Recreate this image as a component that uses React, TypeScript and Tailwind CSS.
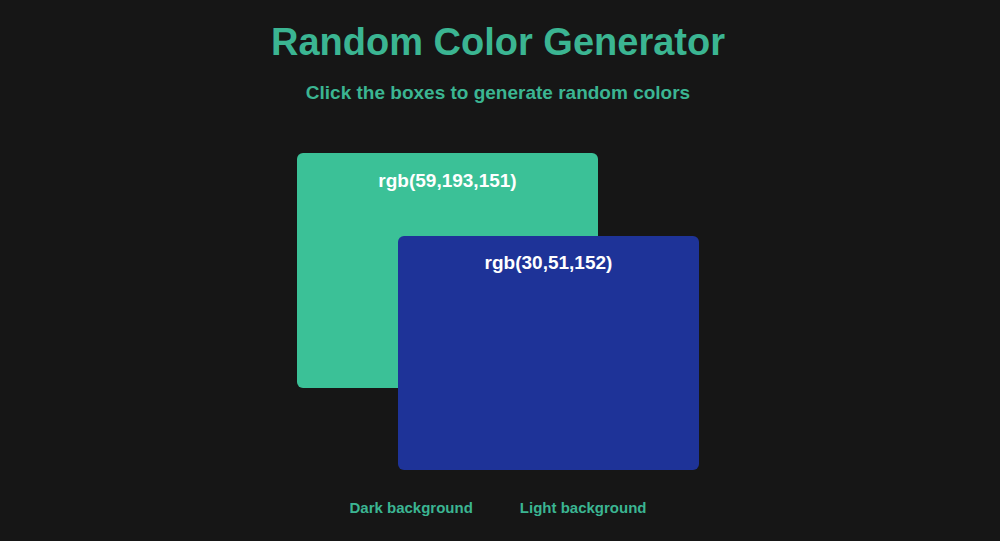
export default function App() {
  return (
    <div
      className="flex flex-col items-center w-full h-[541px] bg-[#161616] pr-[4px] font-bold"
      style={{ fontFamily: '"Liberation Sans", Arial, sans-serif' }}
    >
      <h1 className="mt-[20px] text-[38px] leading-[44px] text-[#3bb592]">
        Random Color Generator
      </h1>
      <p className="mt-[17px] text-[19px] leading-[24px] text-[#3bb592]">
        Click the boxes to generate random colors
      </p>
      <div className="mt-[48px] w-[402px]">
        <div className="w-[301px] h-[235px] rounded-[6px] bg-[rgb(59,193,151)] pt-[17px] text-center text-white text-[19px] leading-[22px]">
          rgb(59,193,151)
        </div>
        <div className="relative w-[301px] h-[234px] ml-[101px] -mt-[152px] rounded-[6px] bg-[rgb(30,51,152)] pt-[16px] text-center text-white text-[19px] leading-[22px]">
          rgb(30,51,152)
        </div>
      </div>
      <div className="mt-[28px] flex gap-[47px] text-[15px] leading-[20px] text-[#3bb592]">
        <button className="font-bold">Dark background</button>
        <button className="font-bold">Light background</button>
      </div>
    </div>
  );
}
